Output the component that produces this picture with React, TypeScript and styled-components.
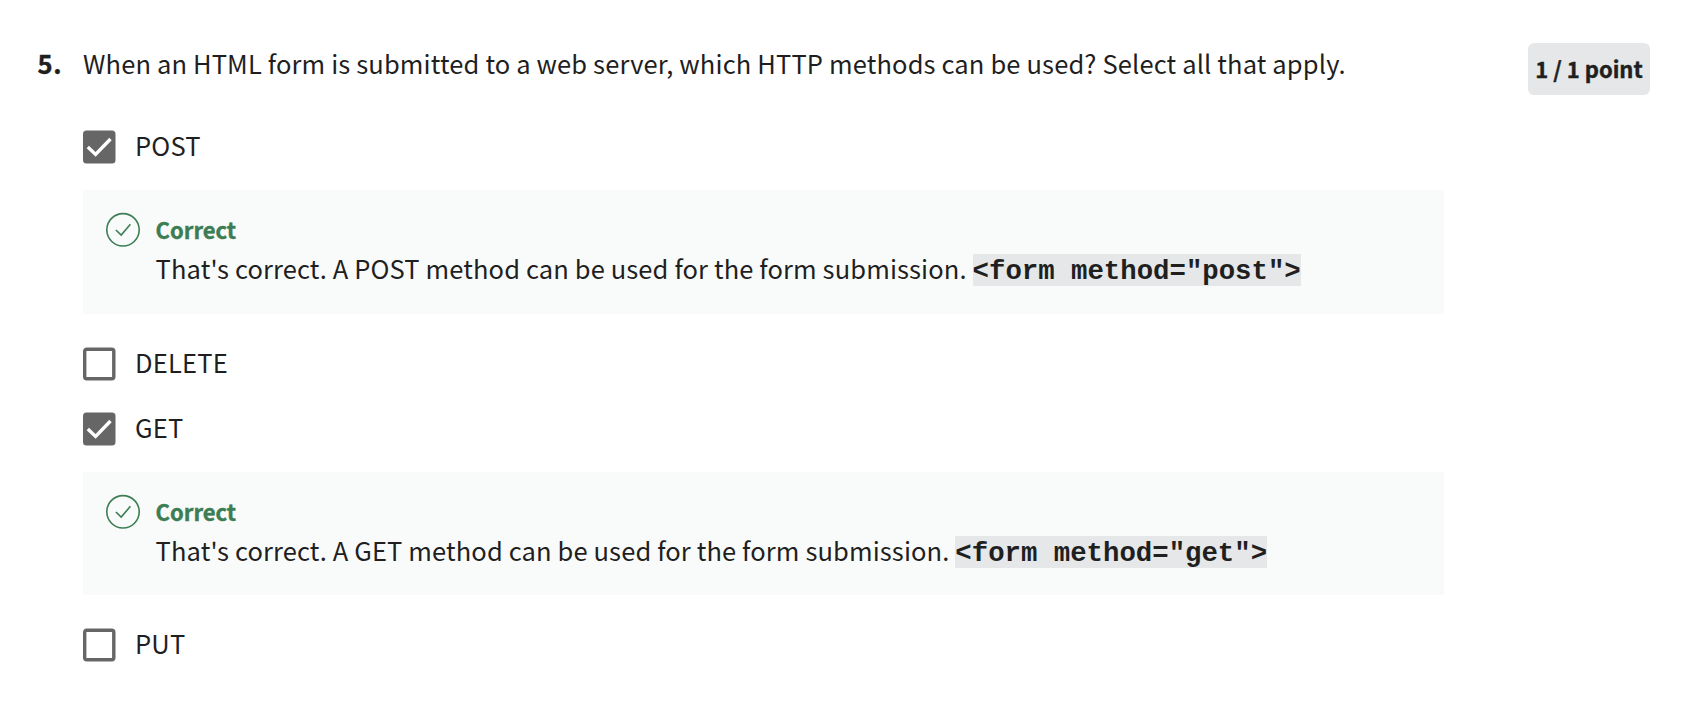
import React from "react";
import styled, { createGlobalStyle } from "styled-components";

const GlobalStyle = createGlobalStyle`
  *, *::before, *::after { box-sizing: border-box; }
  body {
    margin: 0;
    background: #ffffff;
    color: #1f1f1f;
    font-family: "Noto Sans CJK SC", "Open Sans", sans-serif;
    font-size: 25.5px;
    line-height: 38px;
  }
`;

const Page = styled.main`
  display: flex;
  align-items: flex-start;
  width: 1700px;
  height: 716px;
  padding: 43px 50px 0 37.5px;
  overflow: hidden;
`;

const QuestionNumber = styled.div`
  flex: 0 0 45.5px;
  padding-top: 1px;
  font-weight: 700;
  letter-spacing: 0.8px;
  -webkit-text-stroke: 0.4px currentColor;
`;

const Question = styled.section`
  flex: 0 0 1361px;
  min-width: 0;
`;

const Prompt = styled.h1`
  margin: 0 0 44px;
  padding-top: 1px;
  font-size: inherit;
  font-weight: 400;
  letter-spacing: 0.14px;
  white-space: nowrap;
`;

const Points = styled.div`
  flex: 0 0 122px;
  height: 52px;
  margin-left: auto;
  border-radius: 6px;
  background: #e5e7e8;
  font-size: 22px;
  font-weight: 700;
  line-height: 50px;
  text-align: center;
  white-space: nowrap;
  -webkit-text-stroke: 0.4px currentColor;
`;

const Option = styled.label<{ $gap: number }>`
  display: flex;
  align-items: center;
  height: 42px;
  margin-bottom: ${(p) => p.$gap}px;
`;

const OptionLabel = styled.span`
  margin-left: 19px;
  padding-bottom: 4px;
  letter-spacing: 0.2px;
`;

const Feedback = styled.div<{ $height: number }>`
  display: flex;
  align-items: flex-start;
  height: ${(p) => p.$height}px;
  margin-bottom: 29px;
  padding: 20px 22px 0;
  background: #f9fbfa;
`;

const FeedbackBody = styled.div`
  margin-left: 15.6px;
  white-space: nowrap;
`;

const Verdict = styled.div`
  height: 38px;
  color: #3c7d54;
  font-size: 22px;
  font-weight: 700;
  -webkit-text-stroke: 0.4px currentColor;
`;

const Explanation = styled.div`
  height: 40px;
  line-height: 40px;
  letter-spacing: 0.12px;
`;

const Code = styled.code`
  display: inline-block;
  padding-top: 4px;
  background: #e5e7e8;
  font-family: "Liberation Mono", monospace;
  font-size: 27.35px;
  font-weight: 700;
  line-height: 28px;
  letter-spacing: 0;
`;

const StatusIcon = styled.svg`
  flex: none;
  margin-top: 2px;
`;

function Checkbox({ checked }: { checked: boolean }) {
  return (
    <svg width="33" height="34" viewBox="0 0 33 34" fill="none">
      {checked ? (
        <>
          <rect x="0" y="0.5" width="32.5" height="33" rx="3.5" fill="#666666" />
          <path d="M4.8 16.9 12.6 24.4 27.5 9" stroke="#ffffff" strokeWidth="3.4" />
        </>
      ) : (
        <rect x="1.7" y="2.2" width="29.1" height="29.6" rx="2" stroke="#666666" strokeWidth="3.4" />
      )}
    </svg>
  );
}

function CorrectIcon() {
  return (
    <StatusIcon width="35" height="36" viewBox="0 0 35 36" fill="none" stroke="#3c7d54" strokeWidth="1.6">
      <circle cx="18" cy="17.8" r="16.2" />
      <path d="M10.9 18 16.2 23.1 25.4 12.3" />
    </StatusIcon>
  );
}

function CorrectFeedback({ text, code, height }: { text: string; code: string; height: number }) {
  return (
    <Feedback $height={height}>
      <CorrectIcon />
      <FeedbackBody>
        <Verdict>Correct</Verdict>
        <Explanation>
          {text} <Code>{code}</Code>
        </Explanation>
      </FeedbackBody>
    </Feedback>
  );
}

export default function App() {
  return (
    <>
      <GlobalStyle />
      <Page>
        <QuestionNumber>5.</QuestionNumber>
        <Question>
          <Prompt>
            When an HTML form is submitted to a web server, which HTTP methods can be used? Select all that apply.
          </Prompt>
          <Option $gap={22}>
            <Checkbox checked />
            <OptionLabel>POST</OptionLabel>
          </Option>
          <CorrectFeedback
            text="That's correct. A POST method can be used for the form submission."
            code={'<form method="post">'}
            height={124}
          />
          <Option $gap={23}>
            <Checkbox checked={false} />
            <OptionLabel>DELETE</OptionLabel>
          </Option>
          <Option $gap={22}>
            <Checkbox checked />
            <OptionLabel>GET</OptionLabel>
          </Option>
          <CorrectFeedback
            text="That's correct. A GET method can be used for the form submission."
            code={'<form method="get">'}
            height={123}
          />
          <Option $gap={0}>
            <Checkbox checked={false} />
            <OptionLabel>PUT</OptionLabel>
          </Option>
        </Question>
        <Points>1 / 1 point</Points>
      </Page>
    </>
  );
}
